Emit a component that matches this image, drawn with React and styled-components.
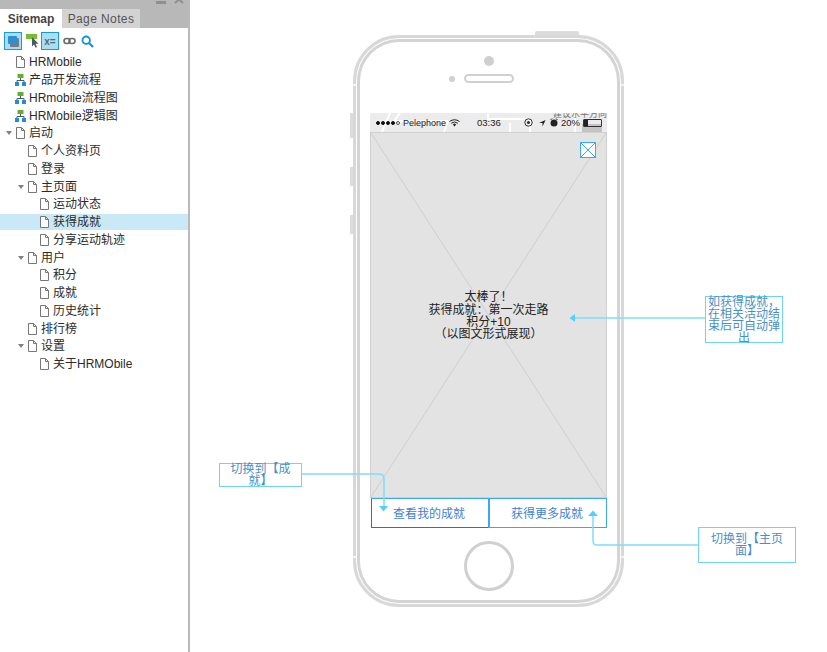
import React from 'react';
import styled, { createGlobalStyle } from 'styled-components';

const FONT = '"Liberation Sans", "Noto Sans CJK SC", sans-serif';

const tree = [
  { label: 'HRMobile', depth: 0, icon: 'page' },
  { label: '产品开发流程', depth: 0, icon: 'flow' },
  { label: 'HRmobile流程图', depth: 0, icon: 'flow' },
  { label: 'HRMobile逻辑图', depth: 0, icon: 'flow' },
  { label: '启动', depth: 0, icon: 'page', open: true },
  { label: '个人资料页', depth: 1, icon: 'page' },
  { label: '登录', depth: 1, icon: 'page' },
  { label: '主页面', depth: 1, icon: 'page', open: true },
  { label: '运动状态', depth: 2, icon: 'page' },
  { label: '获得成就', depth: 2, icon: 'page', active: true },
  { label: '分享运动轨迹', depth: 2, icon: 'page' },
  { label: '用户', depth: 1, icon: 'page', open: true },
  { label: '积分', depth: 2, icon: 'page' },
  { label: '成就', depth: 2, icon: 'page' },
  { label: '历史统计', depth: 2, icon: 'page' },
  { label: '排行榜', depth: 1, icon: 'page' },
  { label: '设置', depth: 1, icon: 'page', open: true },
  { label: '关于HRMObile', depth: 2, icon: 'page' },
];

const PageIcon = () => (
  <svg width="9" height="12" viewBox="0 0 9 12">
    <path d="M0.500 0.500H5.500L8.500 3.500V11.500H0.500Z M5.500 0.500V3.500H8.500" fill="#fff" stroke="#777" />
  </svg>
);

const FlowIcon = () => (
  <svg width="11" height="12" viewBox="0 0 11 12">
    <rect x="2.500" y="0" width="6" height="4" fill="#62b02f" />
    <path d="M5.500 4V6M2 8V6.500H9V8" fill="none" stroke="#555" />
    <rect x="0" y="8" width="4" height="4" fill="#1f8fd0" />
    <rect x="7" y="8" width="4" height="4" fill="#1f8fd0" />
  </svg>
);

const App = () => (
  <Page>
    <GlobalStyle />
    <Sidebar>
      <TabBar>
        <WindowControls>
          <Minimize />
          <svg width="10" height="6" viewBox="0 0 10 6">
            <path d="M1 5L5 1.500L9 5" fill="none" stroke="#8f8f8f" strokeWidth="2" />
          </svg>
        </WindowControls>
        <Tab $active>Sitemap</Tab>
        <Tab>Page Notes</Tab>
      </TabBar>
      <Toolbar>
        <ToolButton $on $outlined>
          <svg width="11" height="11" viewBox="0 0 11 11">
            <rect x="2" y="2" width="9" height="9" rx="1" fill="#6f7f8a" />
            <rect x="0" y="0" width="9" height="8" rx="1" fill="#2f8fd0" />
          </svg>
        </ToolButton>
        <ToolButton>
          <svg width="13" height="14" viewBox="0 0 13 14">
            <rect x="0" y="0" width="11" height="5" fill="#72c02c" />
            <path d="M6 3V12.500L8 10.500L9.600 13.800L11 13L9.500 9.800H12.500Z" fill="#4c5a64" />
          </svg>
        </ToolButton>
        <ToolButton $on $outlined>
          <VarGlyph>x=</VarGlyph>
        </ToolButton>
        <ToolButton>
          <svg width="13" height="8" viewBox="0 0 13 8">
            <rect x="1" y="1.500" width="6" height="5" rx="2.500" fill="none" stroke="#6a6a6a" strokeWidth="1.600" />
            <rect x="6" y="1.500" width="6" height="5" rx="2.500" fill="none" stroke="#6a6a6a" strokeWidth="1.600" />
          </svg>
        </ToolButton>
        <ToolButton>
          <svg width="13" height="13" viewBox="0 0 14 14">
            <circle cx="5.600" cy="5.600" r="4" fill="none" stroke="#1593d3" strokeWidth="2" />
            <path d="M8.600 8.600L13 13" stroke="#1593d3" strokeWidth="2.400" />
          </svg>
        </ToolButton>
      </Toolbar>
      <Tree>
        {tree.map(item => (
          <TreeRow key={item.label} $depth={item.depth} $active={item.active}>
            <Caret $open={item.open} />
            <IconSlot>{item.icon === 'flow' ? <FlowIcon /> : <PageIcon />}</IconSlot>
            <RowLabel>{item.label}</RowLabel>
          </TreeRow>
        ))}
      </Tree>
    </Sidebar>

    <Canvas>
      <Phone>
        <TopButton />
        <SideButton $top={75} $height={25} />
        <SideButton $top={129} $height={19} />
        <SideButton $top={177} $height={19} />
        <Antenna $top={46} $side="left" />
        <Antenna $top={46} $side="right" />
        <Antenna $top={518} $side="left" />
        <Antenna $top={518} $side="right" />
        <Earpiece>
          <Camera />
          <SpeakerRow>
            <Sensor />
            <Speaker />
          </SpeakerRow>
        </Earpiece>
        <Screen>
          <StatusBar>
            <StatusTexture width="237" height="19" viewBox="0 0 237 19">
              <path d="M12 19L20 0M30 0L24 8H78M78 8L74 19M118 0V6H160M160 6V19M205 0V19M140 19V10" fill="none" stroke="#fff" strokeWidth="2" />
              <rect x="212" y="11" width="20" height="8" fill="#c4c4c4" />
            </StatusTexture>
            <CutOffText>建议水平方向</CutOffText>
            <StatusLeft>
              <Dots>
                <Dot />
                <Dot />
                <Dot />
                <Dot />
                <Dot $hollow />
              </Dots>
              <span>Pelephone</span>
              <svg width="11" height="8" viewBox="0 0 11 8">
                <path d="M0.500 2.500Q5.500 -1 10.500 2.500M2.200 4.200Q5.500 1.800 8.800 4.200" fill="none" stroke="#222" />
                <path d="M3.800 5.600L5.500 4.600L7.200 5.600L5.500 7.600Z" fill="#222" />
              </svg>
            </StatusLeft>
            <StatusTime>03:36</StatusTime>
            <StatusRight>
              <RecordIcon width="9" height="9" viewBox="0 0 9 9">
                <circle cx="4.500" cy="4.500" r="3.700" fill="none" stroke="#333" />
                <circle cx="4.500" cy="4.500" r="1.600" fill="#333" />
              </RecordIcon>
              <svg width="7" height="8" viewBox="0 0 8 8">
                <path d="M0 4L7.500 0.500L4 8V4Z" fill="#222" />
              </svg>
              <svg width="8" height="9" viewBox="0 0 8 9">
                <circle cx="4" cy="5" r="3.500" fill="#222" />
                <path d="M0.500 2L2 0.500M7.500 2L6 0.500" stroke="#222" />
              </svg>
              <Percent>20%</Percent>
              <Battery>
                <BatteryLevel />
              </Battery>
            </StatusRight>
          </StatusBar>

          <Placeholder>
            <PlaceholderCross viewBox="0 0 237 366" preserveAspectRatio="none">
              <path d="M0 0L237 366M237 0L0 366" stroke="#cfcfcf" fill="none" />
            </PlaceholderCross>
            <CloseBox>
              <svg width="16" height="16" viewBox="0 0 16 16">
                <rect x="0.500" y="0.500" width="15" height="15" fill="#fff" stroke="#3aa8f5" />
                <path d="M1 1L15 15M15 1L1 15" stroke="#3aa8f5" />
              </svg>
            </CloseBox>
            <Message>
              <div>太棒了！</div>
              <div>获得成就：第一次走路</div>
              <div>积分+10</div>
              <div>（以图文形式展现）</div>
            </Message>
          </Placeholder>

          <ButtonRow>
            <ActionButton>查看我的成就</ActionButton>
            <ActionButton>获得更多成就</ActionButton>
          </ButtonRow>
        </Screen>
        <HomeArea>
          <HomeButton />
        </HomeArea>
      </Phone>

      <Note $left={515} $top={296} $width={78} $height={47}>
        如获得成就，在相关活动结束后可自动弹出
      </Note>
      <Note $left={29} $top={463} $width={83} $height={24}>
        切换到【成就】
      </Note>
      <Note $left={508} $top={527} $width={98} $height={36} $pad={10}>
        切换到【主页面】
      </Note>

      <Connectors width="637" height="652" viewBox="190 0 637 652">
        <g fill="none" stroke="#7fdcff" strokeWidth="1.500">
          <path d="M705 318H574" />
          <path d="M301 474H379Q384 474 384 479V507" />
          <path d="M698 545H597Q593 545 593 541V516" />
        </g>
        <g fill="#4fd0ff">
          <path d="M569.500 318L575 314V322Z" />
          <path d="M379 506H388L383.500 511.500Z" />
          <path d="M588 516H598L593 510.500Z" />
        </g>
      </Connectors>
    </Canvas>
  </Page>
);

export default App;

const GlobalStyle = createGlobalStyle`
  html, body {
    margin: 0;
    padding: 0;
    background: #fff;
  }
  body {
    font-family: ${FONT};
  }
`;

const Page = styled.div`
  display: flex;
  width: 827px;
  height: 652px;
  overflow: hidden;
  background: #fff;
`;

const Sidebar = styled.aside`
  width: 188px;
  height: 100%;
  flex: none;
  display: flex;
  flex-direction: column;
  border-right: 2px solid #b9b9b9;
`;

const TabBar = styled.div`
  position: relative;
  height: 28px;
  flex: none;
  box-sizing: border-box;
  padding-top: 9px;
  display: flex;
  align-items: stretch;
  background: #b8b8b8;
`;

const WindowControls = styled.div`
  position: absolute;
  top: -2px;
  right: 4px;
  display: flex;
  align-items: center;
  gap: 8px;
`;

const Minimize = styled.span`
  display: block;
  width: 10px;
  height: 3px;
  margin-top: 3px;
  background: #8f8f8f;
`;

const Tab = styled.div`
  box-sizing: border-box;
  width: ${props => (props.$active ? '62px' : '78px')};
  padding-top: 3px;
  text-align: center;
  font-size: 12px;
  font-weight: ${props => (props.$active ? 700 : 400)};
  letter-spacing: ${props => (props.$active ? '0' : '0.4px')};
  color: ${props => (props.$active ? '#444' : '#555')};
  background: ${props => (props.$active ? '#fff' : '#d3d3d3')};
`;

const Toolbar = styled.div`
  height: 18px;
  flex: none;
  margin-top: 4px;
  padding-left: 4px;
  display: flex;
  align-items: center;
`;

const ToolButton = styled.div`
  box-sizing: border-box;
  width: 18px;
  height: 18px;
  display: flex;
  align-items: center;
  justify-content: center;
  background: ${props => (props.$on ? '#a9dff5' : 'transparent')};
  border: ${props => (props.$outlined ? '1px solid #1a9bd7' : '1px solid transparent')};

  &:first-child {
    margin-right: 1px;
  }
  &:nth-child(4) {
    margin-left: 1px;
  }
`;

const VarGlyph = styled.span`
  font-size: 10px;
  font-weight: 700;
  color: #5a6a72;
`;

const Tree = styled.div`
  margin-top: 3.5px;
  display: flex;
  flex-direction: column;
`;

const TreeRow = styled.div`
  height: 17.75px;
  display: flex;
  align-items: center;
  padding-left: ${props => 3 + props.$depth * 12}px;
  background: ${props => (props.$active ? 'linear-gradient(#c9e9f7, #c9e9f7) 0 50% / 100% 16px no-repeat' : 'transparent')};
`;

const Caret = styled.span`
  width: 0;
  height: 0;
  flex: none;
  border-style: solid;
  border-width: 4px 3px 0;
  border-color: ${props => (props.$open ? '#808080' : 'transparent')} transparent transparent;
  margin: 0 2px 0 3px;
`;

const IconSlot = styled.span`
  width: 13px;
  flex: none;
  display: flex;
  justify-content: center;
`;

const RowLabel = styled.span`
  margin-left: 2px;
  font-size: 12px;
  line-height: 14px;
  color: #2b2b2b;
  white-space: nowrap;
`;

const Canvas = styled.main`
  position: relative;
  flex: 1;
  height: 100%;
`;

const Phone = styled.div`
  position: absolute;
  left: 163px;
  top: 35px;
  box-sizing: border-box;
  width: 271px;
  height: 572px;
  padding: 0 14px;
  display: flex;
  flex-direction: column;
  align-items: center;
  border: 3px solid #d8d8d8;
  border-radius: 46px;
  background: #fff;
  box-shadow: inset 0 0 0 1px #fff, inset 0 0 0 4px #d4d4d4;
`;

const TopButton = styled.span`
  position: absolute;
  top: -7px;
  left: 179px;
  width: 44px;
  height: 4px;
  background: #dcdcdc;
  border-radius: 2px 2px 0 0;
`;

const SideButton = styled.span`
  position: absolute;
  left: -6px;
  top: ${props => props.$top}px;
  width: 3px;
  height: ${props => props.$height}px;
  background: #dcdcdc;
`;

const Antenna = styled.span`
  position: absolute;
  top: ${props => props.$top}px;
  ${props => props.$side}: -3px;
  width: 3px;
  height: 2px;
  background: #f4f4f4;
`;

const Earpiece = styled.div`
  height: 75px;
  width: 100%;
  flex: none;
  display: flex;
  flex-direction: column;
  align-items: center;
  box-sizing: border-box;
  padding-top: 18px;
`;

const Camera = styled.span`
  width: 10px;
  height: 10px;
  border-radius: 50%;
  background: #cfcfcf;
`;

const SpeakerRow = styled.div`
  position: relative;
  margin-top: 8px;
`;

const Sensor = styled.span`
  position: absolute;
  left: -15px;
  top: 1.500px;
  width: 6px;
  height: 6px;
  border-radius: 50%;
  background: #cfcfcf;
`;

const Speaker = styled.span`
  display: block;
  box-sizing: border-box;
  width: 50px;
  height: 9px;
  border: 2px solid #d0d0d0;
  border-radius: 5px;
`;

const Screen = styled.div`
  width: 237px;
  flex: none;
  display: flex;
  flex-direction: column;
`;

const StatusBar = styled.div`
  position: relative;
  height: 19px;
  flex: none;
  display: flex;
  align-items: center;
  padding: 0 5px 0 6px;
  overflow: hidden;
  background: #ececec;
  font-size: 9px;
  color: #222;
`;

const StatusTexture = styled.svg`
  position: absolute;
  inset: 0;
`;

const CutOffText = styled.span`
  position: absolute;
  top: -4px;
  right: 0;
  font-size: 9px;
  line-height: 10px;
  color: #777;
`;

const StatusLeft = styled.div`
  position: relative;
  display: flex;
  align-items: center;
  gap: 3px;
  width: 96px;
`;

const Dots = styled.span`
  display: flex;
  gap: 1px;
`;

const Dot = styled.span`
  box-sizing: border-box;
  width: 4px;
  height: 4px;
  border-radius: 50%;
  background: ${props => (props.$hollow ? 'transparent' : '#111')};
  border: 1px solid ${props => (props.$hollow ? '#555' : '#111')};
`;

const StatusTime = styled.span`
  position: relative;
  margin-left: 5px;
  font-size: 9.500px;
`;

const StatusRight = styled.div`
  position: relative;
  margin-left: auto;
  display: flex;
  align-items: center;
  gap: 4px;
`;

const RecordIcon = styled.svg`
  margin-right: 2px;
`;

const Percent = styled.span`
  margin: 0 -1px 0 -1px;
  font-size: 9.500px;
`;

const Battery = styled.span`
  box-sizing: border-box;
  display: block;
  width: 19px;
  height: 8px;
  border: 1px solid #333;
  border-radius: 1px;
`;

const BatteryLevel = styled.span`
  display: block;
  width: 4px;
  height: 100%;
  background: #222;
`;

const Placeholder = styled.div`
  position: relative;
  box-sizing: border-box;
  height: 366px;
  flex: none;
  display: flex;
  align-items: center;
  justify-content: center;
  background: #e3e3e3;
  border: 1px solid #d0d0d0;
`;

const PlaceholderCross = styled.svg`
  position: absolute;
  inset: 0;
  width: 100%;
  height: 100%;
`;

const CloseBox = styled.div`
  position: absolute;
  top: 9px;
  right: 10px;
  height: 16px;
`;

const Message = styled.div`
  position: relative;
  margin-top: 2px;
  text-align: center;
  font-size: 12px;
  line-height: 12.3px;
  color: #222;
`;

const ButtonRow = styled.div`
  height: 30px;
  flex: none;
  display: flex;
  margin-left: 1px;
`;

const ActionButton = styled.div`
  flex: 1;
  box-sizing: border-box;
  display: flex;
  align-items: center;
  justify-content: center;
  padding: 0 2px 2px 0;
  font-size: 12px;
  color: #3f7fd6;
  background: #fff;
  border: 1px solid #3aa8f5;
  border-left-color: #3f6f95;
  border-bottom-color: #3f6f95;

  & + & {
    border-left: 2px solid #3aa8f5;
    border-bottom-color: #3aa8f5;
    margin-left: -1px;
  }
`;

const HomeArea = styled.div`
  flex: 1;
  display: flex;
  align-items: center;
  justify-content: center;
`;

const HomeButton = styled.span`
  box-sizing: border-box;
  width: 50px;
  height: 50px;
  border: 3px solid #d0d0d0;
  border-radius: 50%;
`;

const Note = styled.div`
  position: absolute;
  left: ${props => props.$left}px;
  top: ${props => props.$top}px;
  box-sizing: border-box;
  width: ${props => props.$width}px;
  height: ${props => props.$height}px;
  display: flex;
  align-items: center;
  justify-content: center;
  text-align: center;
  padding: 0 ${props => props.$pad || 2}px;
  overflow: visible;
  font-size: 12px;
  line-height: 12px;
  color: #4a8fc4;
  background: #fff;
  border: 1px solid #6fd3f5;
`;

const Connectors = styled.svg`
  position: absolute;
  left: 0;
  top: 0;
  pointer-events: none;
`;
